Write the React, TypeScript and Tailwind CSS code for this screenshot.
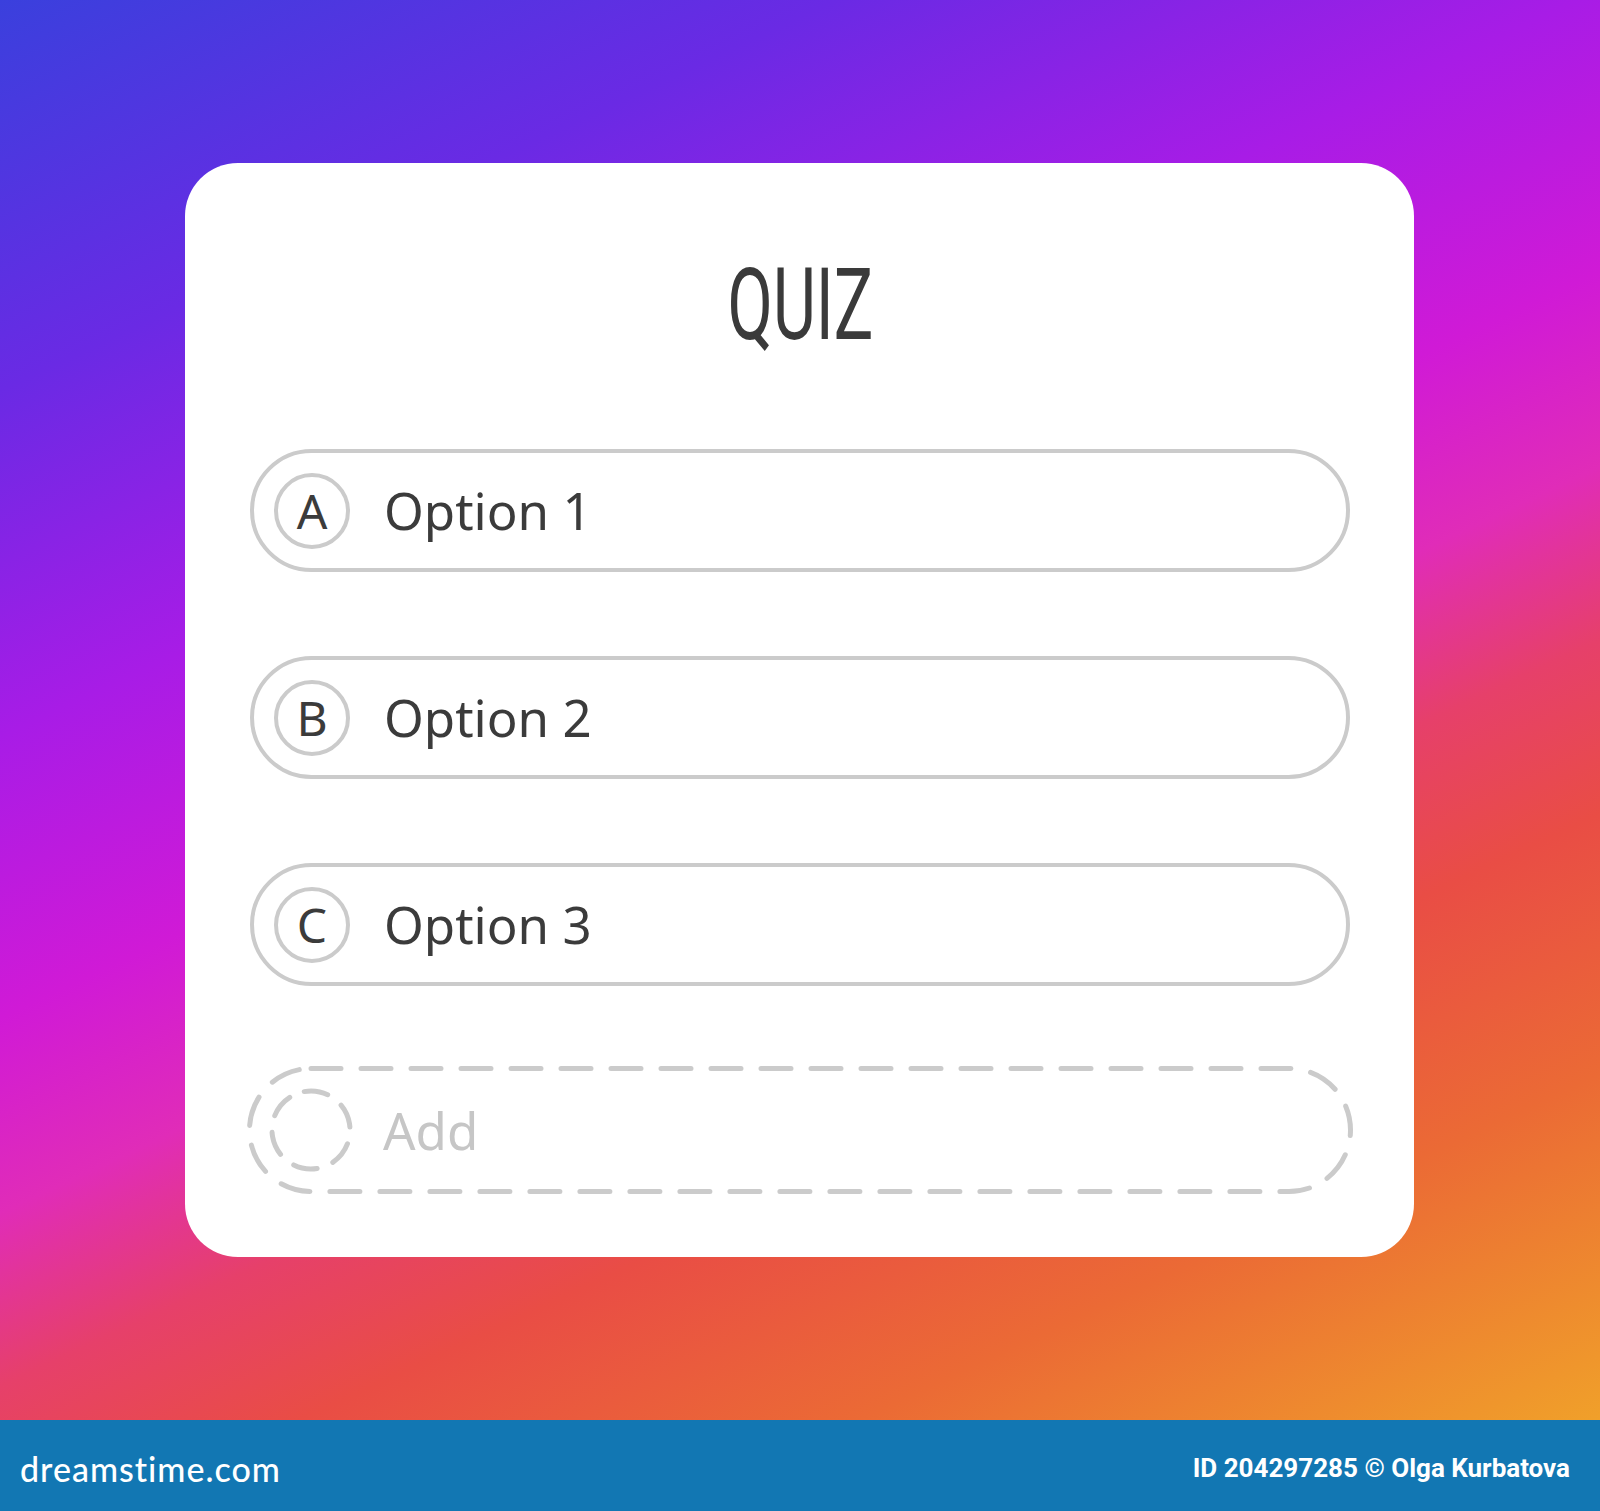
import React from 'react';

const options = [
  { letter: 'A', label: 'Option 1' },
  { letter: 'B', label: 'Option 2' },
  { letter: 'C', label: 'Option 3' },
];

const OptionRow: React.FC<{ letter: string; label: string }> = ({ letter, label }) => (
  <div className="flex h-[123px] items-center rounded-full border-[4px] border-[#cbcbcb] pl-[20px]">
    <div className="flex h-[76px] w-[76px] items-center justify-center rounded-full border-[4px] border-[#cbcbcb] text-[48px] leading-none text-[#3b3b3b] font-['Noto_Sans',sans-serif]">
      {letter}
    </div>
    <span className="ml-[34px] text-[51px] leading-none text-[#3b3b3b] font-['Noto_Sans',sans-serif]">{label}</span>
  </div>
);

const AddRow: React.FC = () => (
  <div className="relative flex h-[128px] items-center pl-[22px]">
    <svg className="absolute inset-0" width="1106" height="128" viewBox="0 0 1106 128" fill="none">
      <rect x="2.5" y="2.5" width="1101" height="123" rx="61.5" stroke="#cbcbcb" strokeWidth="5" strokeDasharray="30 20" strokeLinecap="round" />
    </svg>
    <svg width="84" height="84" viewBox="0 0 84 84" fill="none" className="relative">
      <circle cx="42" cy="42" r="39" stroke="#cbcbcb" strokeWidth="5" strokeDasharray="24 17" strokeLinecap="round" transform="rotate(-100 42 42)" />
    </svg>
    <span className="relative ml-[30px] text-[51px] leading-none text-[#c6c6c6] font-['Noto_Sans',sans-serif]">Add</span>
  </div>
);

const App: React.FC = () => {
  return (
    <div className="flex h-[1511px] w-[1600px] flex-col overflow-hidden">
      <div className="h-[1420px] shrink-0 bg-[linear-gradient(155deg,#3a40dd_0%,#6a2ae4_18%,#a81ce6_34%,#d01ad6_47%,#e02cb8_56%,#e6406a_64%,#e94d45_72%,#eb6a35_84%,#f0a02a_100%)] pl-[185px] pt-[163px]">
        <div className="flex h-[1094px] w-[1229px] flex-col rounded-[53px] bg-white pl-[65px] pr-[64px] pt-[82px]">
          <div className="flex h-[120px] items-center justify-center">
            <h1 className="scale-x-[0.66] text-[100px] font-normal leading-none text-[#3a3a3a] font-['Roboto',sans-serif]">QUIZ</h1>
          </div>
          <div className="mt-[84px] flex flex-col gap-[84px]">
            {options.map((o) => (
              <OptionRow key={o.letter} letter={o.letter} label={o.label} />
            ))}
          </div>
          <div className="mt-[80px] -mx-[3px]">
            <AddRow />
          </div>
        </div>
      </div>
      <div className="flex flex-1 items-center justify-between bg-[#1277b3] px-[20px] pt-[6px] text-white">
        <span className="text-[34px] font-medium tracking-[1px] font-['Lato',sans-serif]">dreamstime.com</span>
        <span className="pr-[10px] text-[26px] font-bold font-['Roboto',sans-serif]">ID 204297285 © Olga Kurbatova</span>
      </div>
    </div>
  );
};

export default App;
